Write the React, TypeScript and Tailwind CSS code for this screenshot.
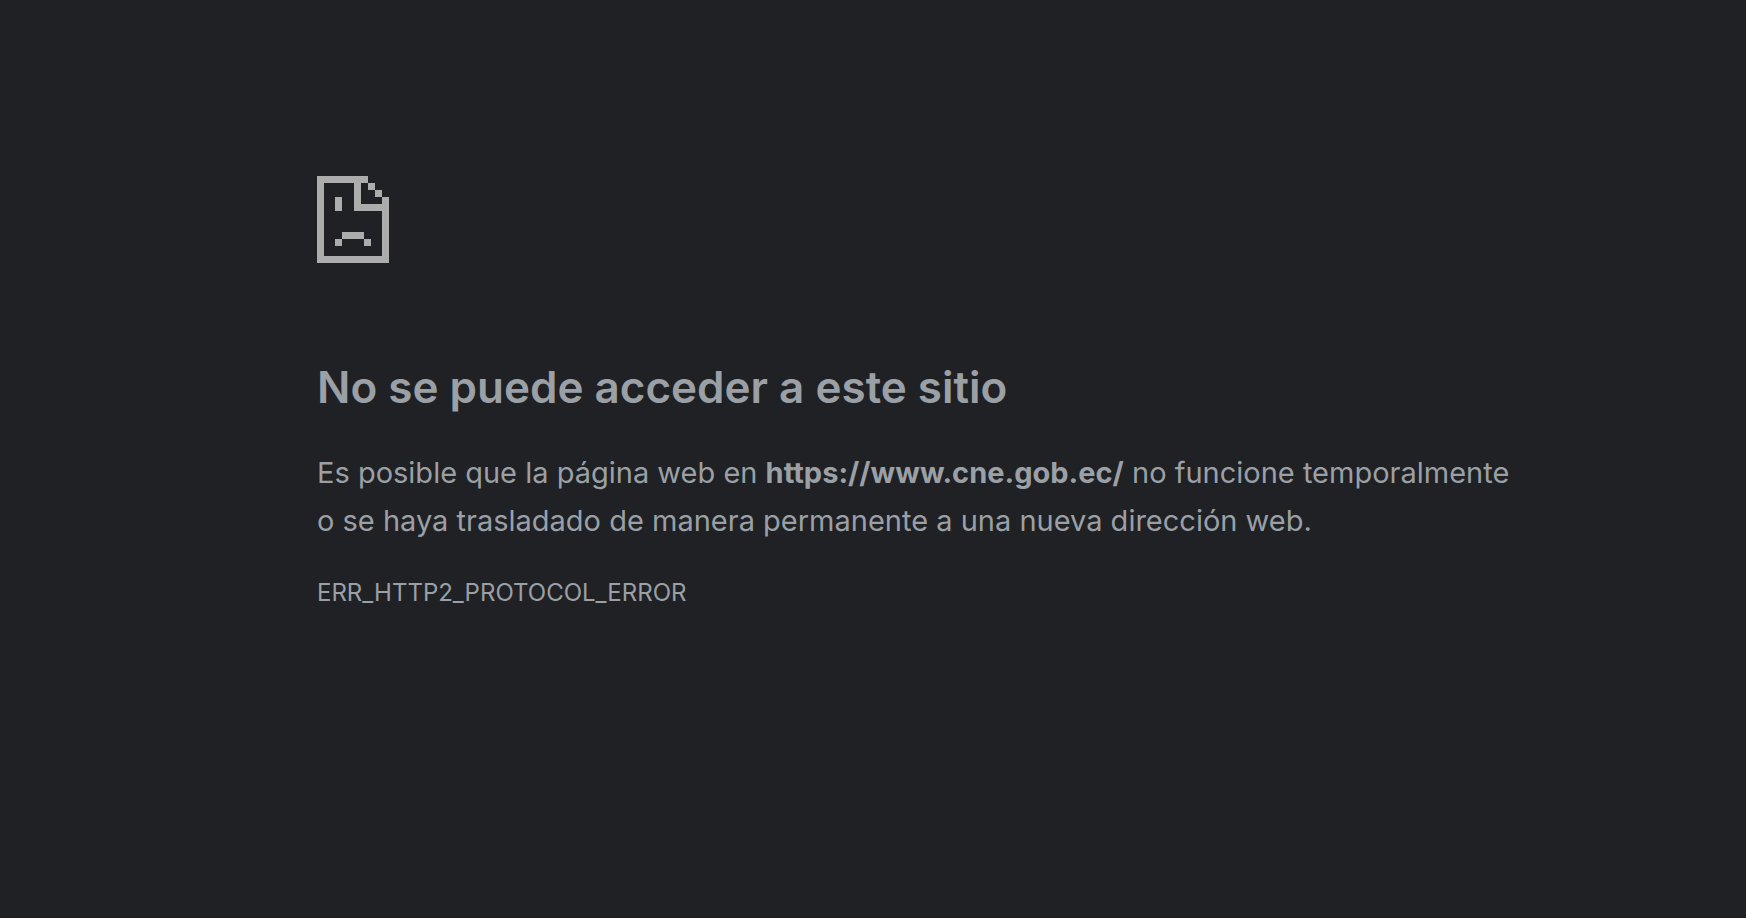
const ERROR_URL = "https://www.cne.gob.ec/";
const ERROR_CODE = "ERR_HTTP2_PROTOCOL_ERROR";

function SadPageIcon() {
  return (
    <svg
      width="72"
      height="87"
      viewBox="0 0 72 87"
      fill="#acacac"
      shapeRendering="crispEdges"
      aria-hidden="true"
    >
      {/* sheet outline */}
      <path d="M0 0H51V7H44V28H65V21H72V87H0ZM7 7V80H65V35H37V7Z" />
      {/* folded corner */}
      <path d="M51 7H58V14H51ZM58 14H65V21H58Z" />
      {/* face */}
      <path d="M18 21H25V35H18ZM25 56H47V63H25ZM18 63H25V70H18ZM47 63H54V70H47Z" />
    </svg>
  );
}

export default function App() {
  return (
    <div className="min-h-screen border-b border-[#231a1f] bg-[#202124] pl-[317px] pr-8 pt-[176px] font-['Inter','Liberation_Sans',sans-serif] text-[#9aa0a6]">
      <main className="max-w-[1200px]">
        <SadPageIcon />
        <h1 className="mt-[94px] text-[44px] font-semibold leading-[60px]">
          No se puede acceder a este sitio
        </h1>
        <p className="mt-8 text-[29px] leading-[48px]">
          Es posible que la página web en{" "}
          <strong className="font-bold">{ERROR_URL}</strong> no funcione
          temporalmente o se haya trasladado de manera permanente a una nueva
          dirección web.
        </p>
        <div className="mt-6 text-[24px] leading-[48px]">{ERROR_CODE}</div>
      </main>
    </div>
  );
}
